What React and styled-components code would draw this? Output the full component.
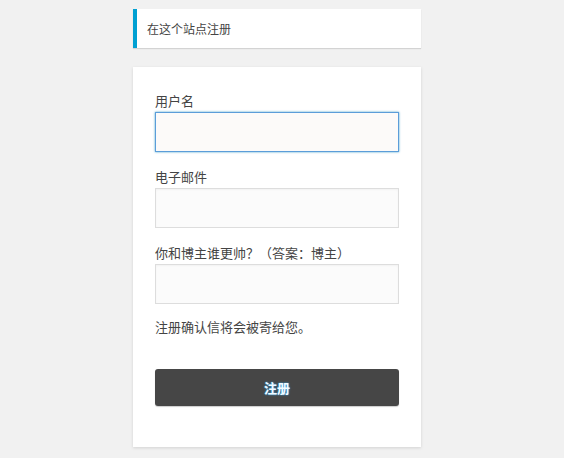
import styled, { createGlobalStyle } from "styled-components";

const GlobalStyle = createGlobalStyle`
  html,
  body {
    margin: 0;
    background: #f1f1f1;
  }
  body {
    font-family: "Noto Sans CJK SC", "Liberation Sans", sans-serif;
    color: #444;
    font-size: 13px;
  }
`;

const Page = styled.div`
  min-height: 458px;
  padding: 9px 0 0 133px;
  box-sizing: border-box;
`;

const Column = styled.div`
  width: 288px;
  display: flex;
  flex-direction: column;
  gap: 19px;
`;

const Message = styled.div`
  background: #fff;
  border-left: 4px solid #00a0d2;
  box-shadow: 0 1px 1px 0 rgba(0, 0, 0, 0.12);
  padding: 11px 10px;
  font-size: 12px;
  line-height: 17px;
  color: #444;
`;

const Card = styled.form`
  background: #fff;
  box-shadow: 0 1px 3px rgba(0, 0, 0, 0.13);
  padding: 25px 22px 41px;
  display: flex;
  flex-direction: column;
`;

const Field = styled.label`
  display: flex;
  flex-direction: column;
  gap: 3px;
  margin-bottom: 16px;
  font-size: 13px;
  line-height: 17px;
  color: #444;
`;

const Input = styled.input`
  box-sizing: border-box;
  width: 100%;
  height: 40px;
  margin: 0;
  padding: 3px 6px;
  font-size: 16px;
  background: ${(p) => (p.$focused ? "#fcfaf9" : "#fbfbfb")};
  border: 1px solid ${(p) => (p.$focused ? "#5b9dd9" : "#ddd")};
  box-shadow: ${(p) => (p.$focused ? "0 0 2px rgba(30, 140, 190, 0.8)" : "inset 0 1px 2px rgba(0, 0, 0, 0.04)")};
  outline: none;
`;

const Note = styled.p`
  margin: -2px 0 33px;
  font-size: 13px;
  line-height: 18px;
  color: #444;
`;

const Submit = styled.button`
  height: 37px;
  width: 100%;
  border: none;
  border-radius: 3px;
  background: #464646;
  box-shadow: 0 1px 1px rgba(0, 0, 0, 0.2);
  color: #f2fbff;
  font-family: inherit;
  font-size: 13px;
  font-weight: 700;
  text-shadow: 0 0 2px #3aa0e0, 0 0 1px #3aa0e0;
  cursor: pointer;
`;

export default function App() {
  return (
    <>
      <GlobalStyle />
      <Page>
        <Column>
          <Message>在这个站点注册</Message>
          <Card onSubmit={(e) => e.preventDefault()}>
            <Field>
              用户名
              <Input type="text" $focused />
            </Field>
            <Field>
              电子邮件
              <Input type="email" />
            </Field>
            <Field>
              你和博主谁更帅？（答案：博主）
              <Input type="text" />
            </Field>
            <Note>注册确认信将会被寄给您。</Note>
            <Submit type="submit">注册</Submit>
          </Card>
        </Column>
      </Page>
    </>
  );
}
